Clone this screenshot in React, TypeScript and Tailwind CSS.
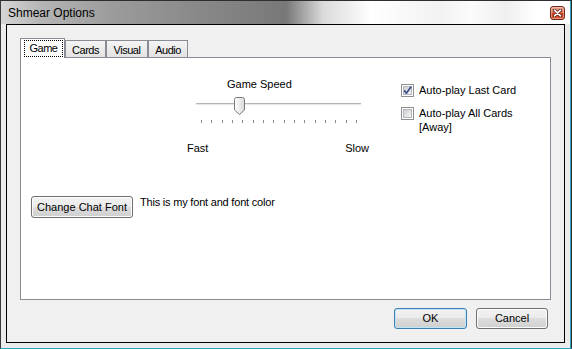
import React from "react";

function CloseButton() {
  return (
    <div className="w-[15px] h-[14px] rounded-[3px] border border-[#6f2a1a] bg-[linear-gradient(to_bottom,#eaa999_0%,#d8755a_45%,#c4401e_55%,#d65a3a_100%)] shadow-[inset_0_0_0_1px_rgba(255,220,200,0.45)] flex items-center justify-center">
      <svg width="9" height="8" viewBox="0 0 9 8">
        <path d="M1.5 1.2 L7.5 6.8 M7.5 1.2 L1.5 6.8" stroke="#5a1e12" strokeWidth="3.2" strokeLinecap="round" />
        <path d="M1.5 1.2 L7.5 6.8 M7.5 1.2 L1.5 6.8" stroke="#ffffff" strokeWidth="1.6" strokeLinecap="round" />
      </svg>
    </div>
  );
}

function CheckBox({ checked, id }: { checked: boolean; id: string }) {
  return (
    <svg width="13" height="13" viewBox="0 0 13 13" className="shrink-0">
      <defs>
        <linearGradient id={id} x1="0" y1="0" x2="1" y2="1">
          <stop offset="0" stopColor="#c9cdd2" />
          <stop offset="1" stopColor="#f6f6f6" />
        </linearGradient>
      </defs>
      <rect x="0.5" y="0.5" width="12" height="12" fill="#ffffff" stroke="#8e8f8f" />
      <rect x="2.5" y="2.5" width="8" height="8" fill={`url(#${id})`} stroke="#b4b8bd" />
      {checked && (
        <path d="M3.2 6.4 L5.4 9.2 L10.2 2.6" fill="none" stroke="#3c4f8a" strokeWidth="1.7" strokeLinejoin="round" />
      )}
    </svg>
  );
}

function Thumb() {
  return (
    <svg width="11" height="18" viewBox="0 0 11 18">
      <defs>
        <linearGradient id="thumbg" x1="0" y1="0" x2="1" y2="0">
          <stop offset="0" stopColor="#ffffff" />
          <stop offset="1" stopColor="#d9d9d9" />
        </linearGradient>
      </defs>
      <path d="M0.5 2.5 Q0.5 0.5 2.5 0.5 H8.5 Q10.5 0.5 10.5 2.5 V13 L5.5 17.5 L0.5 13 Z" fill="url(#thumbg)" stroke="#7a7a7a" />
    </svg>
  );
}

const btn =
  "h-[21px] rounded-[3px] border border-[#707070] bg-[linear-gradient(to_bottom,#f2f2f2_0%,#ebebeb_50%,#dddddd_50%,#cfcfcf_100%)] shadow-[inset_0_0_0_1px_#fcfcfc] flex items-center justify-center text-[11px] leading-[13px]";

export default function App() {
  const ticks = Array.from({ length: 16 }, (_, i) => i);
  return (
    <div className="w-[572px] h-[349px] border-t border-l border-r border-b border-t-[#2e2e2e] border-l-[#3a3a3a] border-r-[#2e2e2e] border-b-[#2ba3bd] font-['Liberation_Sans',Arial,sans-serif] text-black">
      <div className="h-full border-r border-r-[#2ba3bd] flex flex-col bg-[#ececec]">
        <div className="h-[23px] shrink-0 flex items-center pl-[7px] pr-[5px] bg-[linear-gradient(to_right,#d6d6d6_0px,#b5b5b5_40px,#9c9c9c_110px,#888888_200px,#787878_285px,#dadada_322px,#ffffff_370px,#f2f2f2_440px,#fbfbfb_470px,#efefef_505px,#ffffff_535px)]">
          <span className="flex-1 text-[12px] leading-[14px]">Shmear Options</span>
          <CloseButton />
        </div>
        <div className="flex-1 px-[5px] pb-[5px]">
          <div className="h-full border border-black bg-[#f0f0f0] flex flex-col p-[13px]">
            {/* tab strip */}
            <div className="h-[19px] flex items-end text-[11px] leading-[13px] tracking-[-0.5px]">
              <div className="relative z-10 -mb-px w-[45px] h-[20px] border-l border-t border-r border-[#898c95] bg-white">
                <div className="ml-[3px] mt-px w-[39px] h-[17px] border border-dotted border-black flex justify-center">
                  <span className="mt-px">Game</span>
                </div>
              </div>
              <div className="w-[41px] h-[17px] border-l border-t border-r border-[#898c95] bg-[linear-gradient(to_bottom,#f4f4f4,#e3e3e3)] flex justify-center pt-[3px]">
                Cards
              </div>
              <div className="w-[42px] h-[17px] border-l border-t border-r border-[#898c95] bg-[linear-gradient(to_bottom,#f4f4f4,#e3e3e3)] flex justify-center pt-[3px]">
                Visual
              </div>
              <div className="w-[40px] h-[17px] border-l border-t border-r border-[#898c95] bg-[linear-gradient(to_bottom,#f4f4f4,#e3e3e3)] flex justify-center pt-[3px]">
                Audio
              </div>
            </div>
            {/* panel */}
            <div className="h-[243px] shrink-0 border border-[#898c95] bg-white text-[11px] leading-[13px]">
              <div className="flex items-start pt-[20px] pl-[166px]">
                <div className="w-[182px] flex flex-col">
                  <div className="pl-[40px] h-[13px]">Game Speed</div>
                  <div className="relative mt-[6px] h-[18px]">
                    <div className="ml-[9px] mt-[6px] w-[165px] h-[3px] border-t border-t-[#b5b5b5] border-b border-b-white bg-[#e6e6e6]" />
                    <div className="absolute left-[47px] top-0">
                      <Thumb />
                    </div>
                  </div>
                  <div className="ml-[14px] mt-[5px] w-[156px] h-[3px] flex justify-between">
                    {ticks.map((t) => (
                      <span key={t} className="w-px h-[3px] bg-[#8c8c8c]" />
                    ))}
                  </div>
                  <div className="mt-[19px] flex justify-between">
                    <span>Fast</span>
                    <span>Slow</span>
                  </div>
                </div>
                <div className="ml-[32px] pt-[6px] flex flex-col">
                  <div className="flex items-start gap-[5px]">
                    <CheckBox checked id="cb1" />
                    <span>Auto-play Last Card</span>
                  </div>
                  <div className="mt-[10px] flex items-start gap-[5px]">
                    <CheckBox checked={false} id="cb2" />
                    <span className="leading-[14px] -mt-px">
                      Auto-play All Cards
                      <br />
                      [Away]
                    </span>
                  </div>
                </div>
              </div>
              <div className="mt-[41px] pl-[10px] flex items-start gap-[7px]">
                <div className={`${btn} w-[102px] !h-[22px]`}>Change Chat Font</div>
                <span className="tracking-[-0.2px]">This is my font and font color</span>
              </div>
            </div>
            {/* buttons */}
            <div className="mt-[8px] flex justify-end gap-[9px] pr-[3px]">
              <div className={`${btn} w-[73px] !border-[#3c7fb1] !shadow-[inset_0_0_0_1px_#bfe6f8]`}>OK</div>
              <div className={`${btn} w-[72px]`}>Cancel</div>
            </div>
          </div>
        </div>
      </div>
    </div>
  );
}
